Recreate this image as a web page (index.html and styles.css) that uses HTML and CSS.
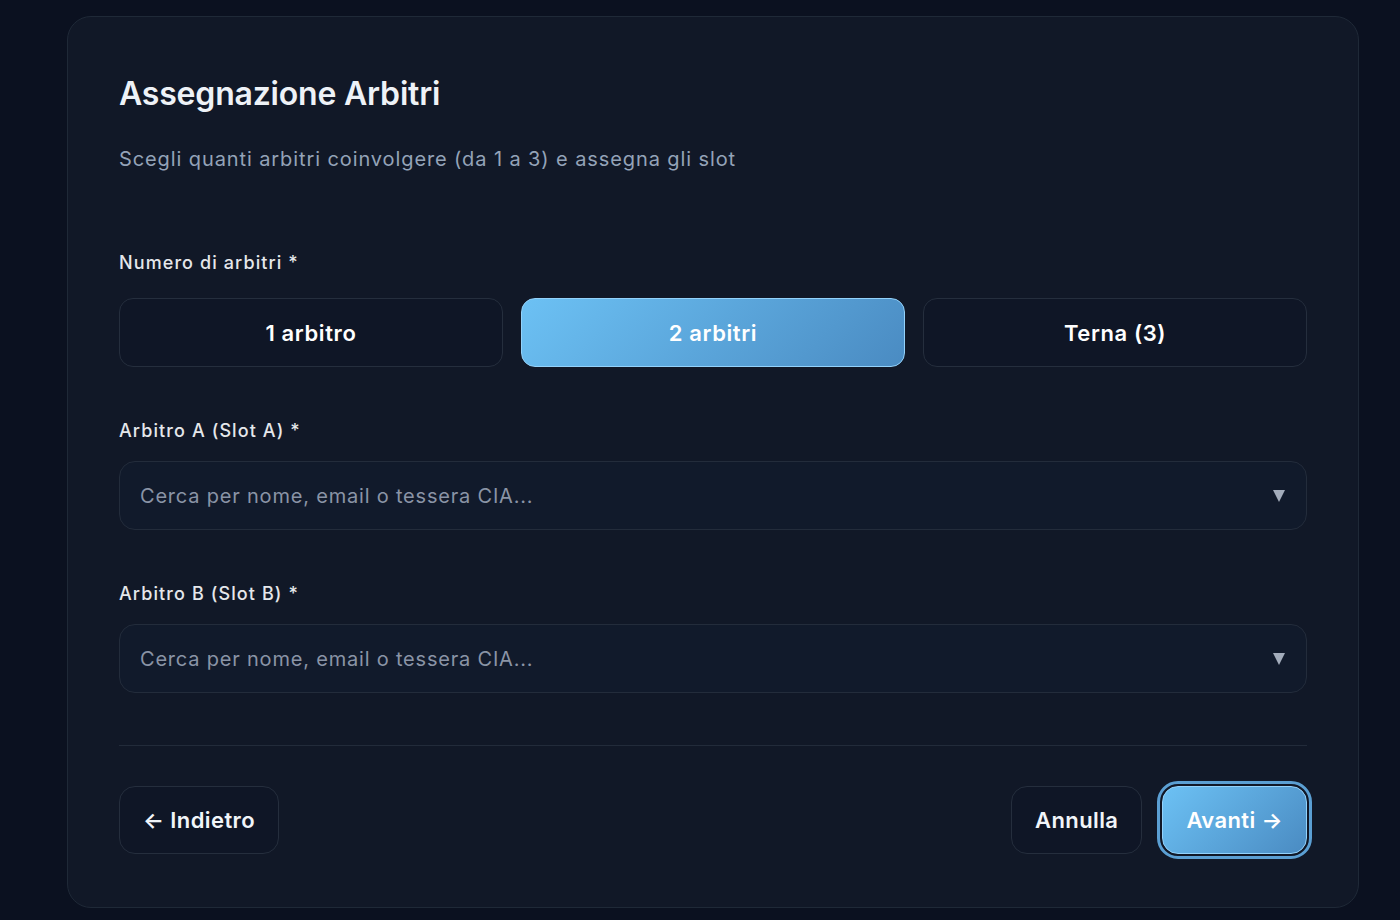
FILE: index.html
```html
<!DOCTYPE html>
<html lang="it">
<head>
  <meta charset="UTF-8">
  <title>Assegnazione Arbitri</title>
  <link rel="stylesheet" href="styles.css">
</head>
<body>

  <div class="card">
    <h1>Assegnazione Arbitri</h1>
    <p class="subtitle">Scegli quanti arbitri coinvolgere (da 1 a 3) e assegna gli slot</p>

    <div class="field first">
      <label>Numero di arbitri *</label>
      <div class="choices">
        <button class="choice">1 arbitro</button>
        <button class="choice active">2 arbitri</button>
        <button class="choice">Terna (3)</button>
      </div>
    </div>

    <div class="field">
      <label>Arbitro A (Slot A) *</label>
      <div class="select">
        <input type="text" placeholder="Cerca per nome, email o tessera CIA...">
        <span class="caret"></span>
      </div>
    </div>

    <div class="field">
      <label>Arbitro B (Slot B) *</label>
      <div class="select">
        <input type="text" placeholder="Cerca per nome, email o tessera CIA...">
        <span class="caret"></span>
      </div>
    </div>

    <div class="footer">
      <button class="btn">&larr; Indietro</button>
      <div class="actions">
        <button class="btn">Annulla</button>
        <button class="btn primary">Avanti &rarr;</button>
      </div>
    </div>
  </div>

</body>
</html>
```

FILE: styles.css
```css
* {
  margin: 0;
  padding: 0;
  box-sizing: border-box;
  font-family: 'Inter', 'Noto Sans', sans-serif;
}

body {
  background: #0b1120;
  padding: 16px 41px 13px 67px;
  color: #f1f5f9;
}

.card {
  background: #111827;
  border: 1px solid #1f2937;
  border-radius: 24px;
  padding: 57px 51px 53px;
}

h1 {
  font-size: 32px;
  font-weight: 600;
  line-height: 40px;
  color: #eef2f7;
  letter-spacing: -0.2px;
}

.subtitle {
  margin-top: 31px;
  font-size: 20px;
  line-height: 28px;
  color: #94a3b8;
  letter-spacing: 0.9px;
}

.field {
  margin-top: 52px;
}

.field.first {
  margin-top: 78px;
}

.field label {
  display: block;
  font-size: 18px;
  font-weight: 500;
  line-height: 24px;
  color: #e5e7eb;
  letter-spacing: 1.1px;
  margin-bottom: 18px;
}

.field.first label {
  margin-bottom: 23px;
}

.choices {
  display: grid;
  grid-template-columns: repeat(3, 1fr);
  gap: 18px;
}

.choice {
  height: 69px;
  background: #0f1626;
  border: 1px solid #252e3d;
  border-radius: 14px;
  color: #ffffff;
  font-size: 22px;
  font-weight: 600;
  letter-spacing: 0.6px;
  cursor: pointer;
}

.choice.active {
  background: linear-gradient(135deg, #6cc1f4, #4a8bc2);
  border: 1px solid #93d2fb;
}

.select {
  position: relative;
}

.select input {
  width: 100%;
  height: 69px;
  background: #111a2b;
  border: 1px solid #232c3b;
  border-radius: 16px;
  padding: 0 60px 0 20px;
  font-size: 20px;
  letter-spacing: 0.8px;
  color: #e5e7eb;
  outline: none;
}

.select input::placeholder {
  color: #8a94a6;
}

/* dropdown arrow */
.caret {
  position: absolute;
  right: 22px;
  top: 29px;
  width: 0;
  height: 0;
  border-left: 6px solid transparent;
  border-right: 6px solid transparent;
  border-top: 12px solid #a3acbb;
}

.footer {
  margin-top: 52px;
  padding-top: 40px;
  border-top: 1px solid #222b3a;
  display: flex;
  justify-content: space-between;
  align-items: center;
}

.actions {
  display: flex;
  gap: 20px;
}

.btn {
  height: 68px;
  padding: 0 23px;
  background: #0f1626;
  border: 1px solid #252e3d;
  border-radius: 16px;
  color: #f1f5f9;
  font-size: 22px;
  font-weight: 600;
  letter-spacing: 0.4px;
  cursor: pointer;
}

.btn.primary {
  background: linear-gradient(135deg, #6cc1f4, #4a8bc2);
  border: 1px solid #93d2fb;
  color: #ffffff;
  outline: 3px solid #5b9fd3;
  outline-offset: 2px;
}
```
